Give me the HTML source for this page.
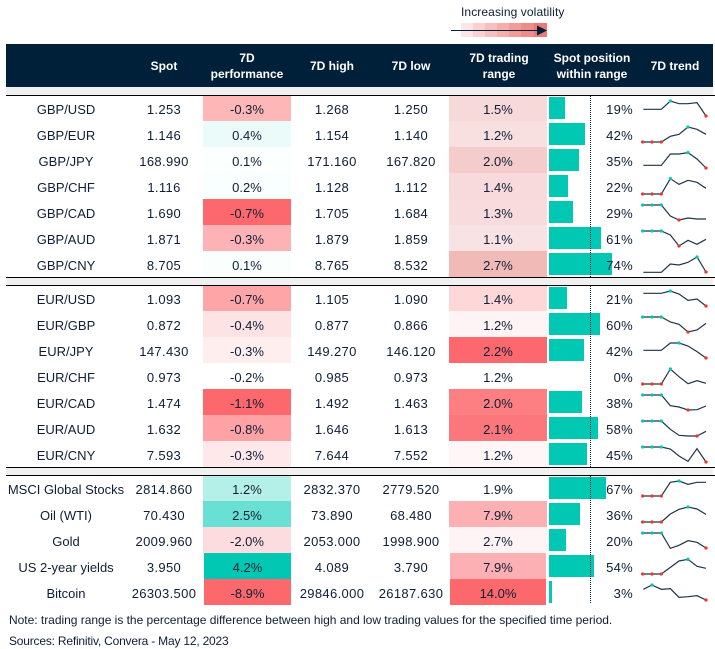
<!DOCTYPE html>
<html><head><meta charset="utf-8"><style>
html,body{margin:0;padding:0;background:#fff}
#w{position:relative;width:715px;height:649px;overflow:hidden;font-family:"Liberation Sans",sans-serif;font-size:13px;color:#0e1e36}
.r{position:absolute;left:0;width:715px;height:26px}
.r i,.r b{position:absolute;top:0;font-style:normal;font-weight:normal;height:26px;line-height:30px;text-align:center;white-space:nowrap}
.n{left:0;width:132px}
.s{left:124px;width:80px;letter-spacing:.35px}
.p{left:203px;width:88px}
.h{left:292px;width:80px;letter-spacing:.35px}
.l{left:371px;width:80px;letter-spacing:.35px}
.g{left:449px;width:98px}
.r b{left:549px;top:2px;height:22px;background:#00c8b3}
.r i.c{left:593px;width:40px;text-align:right;letter-spacing:.3px}
.k{position:absolute;background:#000;left:6px;width:709px;height:1px;z-index:3}
.t{position:absolute;background:#f0f0f0;left:6px;width:707px}
.hd{position:absolute;color:#fff;font-weight:bold;font-size:12px;line-height:16px;text-align:center;white-space:nowrap}
.d{position:absolute;left:590px;width:0;border-left:1px dotted #002039;z-index:4}
svg{position:absolute;z-index:5;overflow:visible}
polyline{fill:none;stroke:#1f3448;stroke-width:3.6}
.a{fill:#00c8b3}.e{fill:#e8382f}
.f{position:absolute;left:9px;font-size:12px;white-space:nowrap}
</style></head><body><div id="w">

<div style="position:absolute;left:461px;top:5px;font-size:12px;line-height:15px;letter-spacing:.1px;white-space:nowrap">Increasing volatility</div>
<div style="position:absolute;left:461px;top:23px;width:12px;height:14px;background:#fde6e6"></div>
<div style="position:absolute;left:473px;top:23px;width:12px;height:14px;background:#fbd0d0"></div>
<div style="position:absolute;left:485px;top:23px;width:12px;height:14px;background:#f8bfbf"></div>
<div style="position:absolute;left:497px;top:23px;width:12px;height:14px;background:#f5aeab"></div>
<div style="position:absolute;left:509px;top:23px;width:12px;height:14px;background:#f29c98"></div>
<div style="position:absolute;left:521px;top:23px;width:13px;height:14px;background:#ee8c87"></div>
<div style="position:absolute;left:534px;top:23px;width:13px;height:14px;background:#e97a75"></div>
<svg style="left:0;top:0" width="715" height="44" viewBox="0 0 715 44"><rect x="451" y="30" width="87" height="1" fill="#002039"/><path d="M537 25.5L547 30.5L537 35.5Z" fill="#002039"/></svg>

<div style="position:absolute;left:6px;top:44px;width:707px;height:43px;background:#002039"></div>
<div class="hd" style="left:124px;width:80px;top:58px">Spot</div>
<div class="hd" style="left:203px;width:88px;top:50px">7D<br>performance</div>
<div class="hd" style="left:292px;width:80px;top:58px">7D high</div>
<div class="hd" style="left:371px;width:80px;top:58px">7D low</div>
<div class="hd" style="left:449px;width:100px;top:50px">7D trading<br>range</div>
<div class="hd" style="left:547px;width:90px;top:50px">Spot position<br>within range</div>
<div class="hd" style="left:640px;width:70px;top:58px">7D trend</div>

<div class="t" style="top:87px;height:8px"></div>
<div class="k" style="top:95px"></div>
<div class="k" style="top:277px"></div>
<div class="t" style="top:278px;height:7px"></div>
<div class="k" style="top:285px"></div>
<div class="k" style="top:467px"></div>
<div class="t" style="top:468px;height:7px"></div>
<div class="k" style="top:475px"></div>

<div class="r" style="top:95px"><i class="n">GBP/USD</i><i class="s">1.253</i><i class="p" style="background:#fdb7b7">-0.3%</i><i class="h">1.268</i><i class="l">1.250</i><i class="g" style="background:#f7d9da">1.5%</i><b style="width:16px"></b><i class="c">19%</i></div>
<div class="r" style="top:121px"><i class="n">GBP/EUR</i><i class="s">1.146</i><i class="p" style="background:#ebfbfa">0.4%</i><i class="h">1.154</i><i class="l">1.140</i><i class="g" style="background:#f8dfe0">1.2%</i><b style="width:36px"></b><i class="c">42%</i></div>
<div class="r" style="top:147px"><i class="n">GBP/JPY</i><i class="s">168.990</i><i class="p" style="background:#fbfffe">0.1%</i><i class="h">171.160</i><i class="l">167.820</i><i class="g" style="background:#f5cccc">2.0%</i><b style="width:30px"></b><i class="c">35%</i></div>
<div class="r" style="top:173px"><i class="n">GBP/CHF</i><i class="s">1.116</i><i class="p" style="background:#f9fefe">0.2%</i><i class="h">1.128</i><i class="l">1.112</i><i class="g" style="background:#f8dadc">1.4%</i><b style="width:19px"></b><i class="c">22%</i></div>
<div class="r" style="top:199px"><i class="n">GBP/CAD</i><i class="s">1.690</i><i class="p" style="background:#fd686c">-0.7%</i><i class="h">1.705</i><i class="l">1.684</i><i class="g" style="background:#f8dcdd">1.3%</i><b style="width:24px"></b><i class="c">29%</i></div>
<div class="r" style="top:225px"><i class="n">GBP/AUD</i><i class="s">1.871</i><i class="p" style="background:#fdb3b5">-0.3%</i><i class="h">1.879</i><i class="l">1.859</i><i class="g" style="background:#f9e2e4">1.1%</i><b style="width:52px"></b><i class="c">61%</i></div>
<div class="r" style="top:251px"><i class="n">GBP/CNY</i><i class="s">8.705</i><i class="p" style="background:#fafffe">0.1%</i><i class="h">8.765</i><i class="l">8.532</i><i class="g" style="background:#f2bab7">2.7%</i><b style="width:63px"></b><i class="c">74%</i></div>

<div class="r" style="top:285px"><i class="n">EUR/USD</i><i class="s">1.093</i><i class="p" style="background:#fea5a7">-0.7%</i><i class="h">1.105</i><i class="l">1.090</i><i class="g" style="background:#fed7d8">1.4%</i><b style="width:18px"></b><i class="c">21%</i></div>
<div class="r" style="top:311px"><i class="n">EUR/GBP</i><i class="s">0.872</i><i class="p" style="background:#fee3e4">-0.4%</i><i class="h">0.877</i><i class="l">0.866</i><i class="g" style="background:#fef4f5">1.2%</i><b style="width:51px"></b><i class="c">60%</i></div>
<div class="r" style="top:337px"><i class="n">EUR/JPY</i><i class="s">147.430</i><i class="p" style="background:#feeeee">-0.3%</i><i class="h">149.270</i><i class="l">146.120</i><i class="g" style="background:#fc686d">2.2%</i><b style="width:35px"></b><i class="c">42%</i></div>
<div class="r" style="top:363px"><i class="n">EUR/CHF</i><i class="s">0.973</i><i class="p">-0.2%</i><i class="h">0.985</i><i class="l">0.973</i><i class="g">1.2%</i><i class="c">0%</i></div>
<div class="r" style="top:389px"><i class="n">EUR/CAD</i><i class="s">1.474</i><i class="p" style="background:#fd686c">-1.1%</i><i class="h">1.492</i><i class="l">1.463</i><i class="g" style="background:#fd7f82">2.0%</i><b style="width:33px"></b><i class="c">38%</i></div>
<div class="r" style="top:415px"><i class="n">EUR/AUD</i><i class="s">1.632</i><i class="p" style="background:#fea2a5">-0.8%</i><i class="h">1.646</i><i class="l">1.613</i><i class="g" style="background:#fc777b">2.1%</i><b style="width:49px"></b><i class="c">58%</i></div>
<div class="r" style="top:441px"><i class="n">EUR/CNY</i><i class="s">7.593</i><i class="p" style="background:#fee8e9">-0.3%</i><i class="h">7.644</i><i class="l">7.552</i><i class="g" style="background:#fef6f7">1.2%</i><b style="width:38px"></b><i class="c">45%</i></div>

<div class="r" style="top:475px"><i class="n">MSCI Global Stocks</i><i class="s">2814.860</i><i class="p" style="background:#b5f0e8">1.2%</i><i class="h">2832.370</i><i class="l">2779.520</i><i class="g">1.9%</i><b style="width:57px"></b><i class="c">67%</i></div>
<div class="r" style="top:501px"><i class="n">Oil (WTI)</i><i class="s">70.430</i><i class="p" style="background:#68e0d3">2.5%</i><i class="h">73.890</i><i class="l">68.480</i><i class="g" style="background:#fdb0b3">7.9%</i><b style="width:31px"></b><i class="c">36%</i></div>
<div class="r" style="top:527px"><i class="n">Gold</i><i class="s">2009.960</i><i class="p" style="background:#fddcdf">-2.0%</i><i class="h">2053.000</i><i class="l">1998.900</i><i class="g" style="background:#fef3f5">2.7%</i><b style="width:17px"></b><i class="c">20%</i></div>
<div class="r" style="top:553px"><i class="n">US 2-year yields</i><i class="s">3.950</i><i class="p" style="background:#00c8b3;left:204px;width:87px">4.2%</i><i class="h">4.089</i><i class="l">3.790</i><i class="g" style="background:#fdb0b3;left:450px;width:96px">7.9%</i><b style="width:45px"></b><i class="c">54%</i></div>
<div class="r" style="top:579px"><i class="n">Bitcoin</i><i class="s">26303.500</i><i class="p" style="background:#fc686c;left:204px;width:87px">-8.9%</i><i class="h">29846.000</i><i class="l">26187.630</i><i class="g" style="background:#fc686c;left:450px;width:96px">14.0%</i><b style="width:3px"></b><i class="c">3%</i></div>

<div class="d" style="top:96px;height:181px"></div>
<div class="d" style="top:286px;height:181px"></div>
<div class="d" style="top:476px;height:127px"></div>

<svg style="left:540px;top:90px" width="175" height="190" viewBox="0 0 525 570">
<polyline points="310,58 364,58 391,33 417,41 444,41 471,38 498,78"/><circle class="a" cx="391" cy="33" r="5"/><circle class="e" cx="498" cy="78" r="5"/>
<polyline points="308,156 364,156 391,139 417,133 444,111 471,118 498,133"/><circle class="e" cx="308" cy="156" r="5"/><circle class="e" cx="336" cy="156" r="5"/><circle class="e" cx="364" cy="156" r="5"/><circle class="a" cx="444" cy="111" r="5"/>
<polyline points="310,226 364,226 391,192 417,192 444,188 471,207 498,234"/><circle class="a" cx="444" cy="188" r="5"/><circle class="e" cx="498" cy="234" r="5"/>
<polyline points="308,312 364,312 391,266 417,283 444,271 471,277 498,295"/><circle class="e" cx="308" cy="312" r="5"/><circle class="e" cx="336" cy="312" r="5"/><circle class="e" cx="364" cy="312" r="5"/><circle class="a" cx="391" cy="266" r="5"/>
<polyline points="308,345 364,345 391,378 417,390 444,384 471,387 498,387"/><circle class="a" cx="308" cy="345" r="5"/><circle class="a" cx="336" cy="345" r="5"/><circle class="a" cx="364" cy="345" r="5"/><circle class="e" cx="417" cy="390" r="5"/>
<polyline points="308,423 364,423 391,435 417,468 444,451 471,463 498,448"/><circle class="a" cx="308" cy="423" r="5"/><circle class="a" cx="336" cy="423" r="5"/><circle class="a" cx="364" cy="423" r="5"/><circle class="e" cx="417" cy="468" r="5"/>
<polyline points="310,547 364,547 391,522 417,525 444,517 471,501 498,546"/><circle class="a" cx="471" cy="501" r="5"/><circle class="e" cx="498" cy="546" r="5"/>
</svg>

<svg style="left:540px;top:280px" width="175" height="190" viewBox="0 0 525 570">
<polyline points="310,40 364,40 391,33 417,42 444,61 471,57 498,78"/><circle class="a" cx="391" cy="33" r="5"/><circle class="e" cx="498" cy="78" r="5"/>
<polyline points="308,111 364,111 391,126 417,133 444,156 471,150 498,130"/><circle class="a" cx="308" cy="111" r="5"/><circle class="a" cx="336" cy="111" r="5"/><circle class="a" cx="364" cy="111" r="5"/><circle class="e" cx="444" cy="156" r="5"/>
<polyline points="310,211 364,211 391,189 417,189 444,198 471,215 498,234"/><circle class="a" cx="417" cy="189" r="5"/><circle class="e" cx="498" cy="234" r="5"/>
<polyline points="308,312 364,312 391,267 417,290 444,311 471,302 498,310"/><circle class="e" cx="308" cy="312" r="5"/><circle class="e" cx="336" cy="312" r="5"/><circle class="e" cx="364" cy="312" r="5"/><circle class="a" cx="391" cy="267" r="5"/>
<polyline points="308,345 364,345 391,377 417,381 444,390 471,389 498,378"/><circle class="a" cx="308" cy="345" r="5"/><circle class="a" cx="336" cy="345" r="5"/><circle class="a" cx="364" cy="345" r="5"/><circle class="e" cx="444" cy="390" r="5"/>
<polyline points="308,423 364,423 391,448 417,466 444,468 471,468 498,454"/><circle class="a" cx="308" cy="423" r="5"/><circle class="a" cx="336" cy="423" r="5"/><circle class="a" cx="364" cy="423" r="5"/><circle class="e" cx="471" cy="468" r="5"/>
<polyline points="308,501 364,501 391,507 417,528 444,544 471,506 498,546"/><circle class="a" cx="308" cy="501" r="5"/><circle class="a" cx="336" cy="501" r="5"/><circle class="a" cx="364" cy="501" r="5"/><circle class="e" cx="498" cy="546" r="5"/>
</svg>

<svg style="left:540px;top:465px" width="175" height="184" viewBox="0 0 525 552">
<polyline points="308,93 364,93 391,52 417,48 444,58 471,52 498,52"/><circle class="e" cx="308" cy="93" r="5"/><circle class="e" cx="336" cy="93" r="5"/><circle class="e" cx="364" cy="93" r="5"/><circle class="a" cx="417" cy="48" r="5"/>
<polyline points="308,171 364,171 391,147 417,133 444,126 471,132 498,148"/><circle class="e" cx="308" cy="171" r="5"/><circle class="e" cx="336" cy="171" r="5"/><circle class="e" cx="364" cy="171" r="5"/><circle class="a" cx="444" cy="126" r="5"/>
<polyline points="308,204 364,204 391,250 417,241 444,227 471,232 498,249"/><circle class="a" cx="308" cy="204" r="5"/><circle class="a" cx="336" cy="204" r="5"/><circle class="a" cx="364" cy="204" r="5"/><circle class="e" cx="498" cy="249" r="5"/>
<polyline points="308,327 364,327 391,307 417,288 444,283 471,304 498,310"/><circle class="e" cx="308" cy="327" r="5"/><circle class="e" cx="336" cy="327" r="5"/><circle class="e" cx="364" cy="327" r="5"/><circle class="a" cx="444" cy="283" r="5"/>
<polyline points="310,373 336,360 364,373 391,371 417,397 444,395 471,392 498,405"/><circle class="a" cx="336" cy="360" r="5"/><circle class="e" cx="498" cy="405" r="5"/>
</svg>

<div class="f" style="top:613px;line-height:15px;letter-spacing:-.02px">Note: trading range is the percentage difference between high and low trading values for the specified time period.</div>
<div class="f" style="top:634px;line-height:15px;letter-spacing:-.2px">Sources: Refinitiv, Convera - May 12, 2023</div>
</div></body></html>
